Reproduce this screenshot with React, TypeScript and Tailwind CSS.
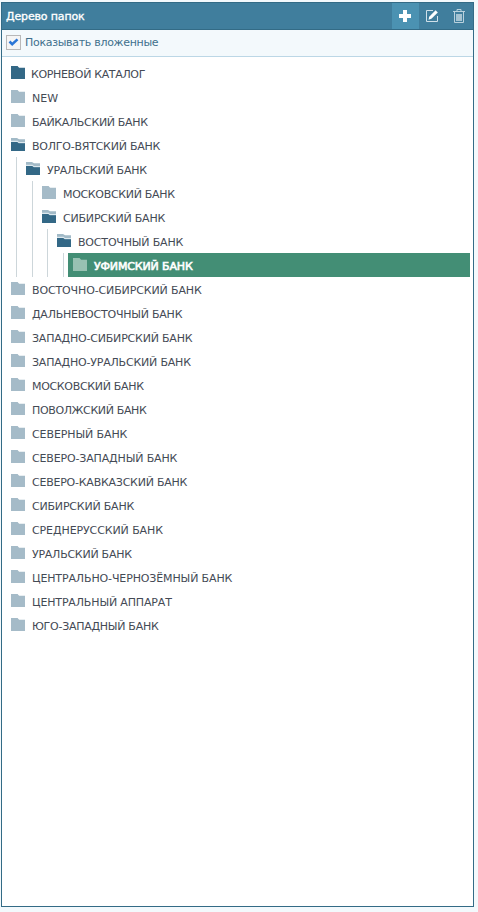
import { useState } from 'react';

type FolderKind = 'root' | 'closed' | 'open';

interface TreeNode {
  name: string;
  tracking?: string;
  kind?: FolderKind;
  selected?: boolean;
  children?: TreeNode[];
}

const tree: TreeNode[] = [
  { name: 'КОРНЕВОЙ КАТАЛОГ', tracking: 'tracking-[-0.34px]', kind: 'root' },
  { name: 'NEW' },
  { name: 'БАЙКАЛЬСКИЙ БАНК', tracking: 'tracking-[-0.34px]' },
  {
    name: 'ВОЛГО-ВЯТСКИЙ БАНК', tracking: 'tracking-[-0.23px]', kind: 'open',
    children: [
      {
        name: 'УРАЛЬСКИЙ БАНК', tracking: 'tracking-[-0.25px]', kind: 'open',
        children: [
          { name: 'МОСКОВСКИЙ БАНК', tracking: 'tracking-[-0.32px]' },
          {
            name: 'СИБИРСКИЙ БАНК', tracking: 'tracking-[-0.2px]', kind: 'open',
            children: [
              {
                name: 'ВОСТОЧНЫЙ БАНК', tracking: 'tracking-[-0.18px]', kind: 'open',
                children: [{ name: 'УФИМСКИЙ БАНК', tracking: 'tracking-[-0.15px]', selected: true }],
              },
            ],
          },
        ],
      },
    ],
  },
  { name: 'ВОСТОЧНО-СИБИРСКИЙ БАНК', tracking: 'tracking-[-0.13px]' },
  { name: 'ДАЛЬНЕВОСТОЧНЫЙ БАНК', tracking: 'tracking-[-0.23px]' },
  { name: 'ЗАПАДНО-СИБИРСКИЙ БАНК', tracking: 'tracking-[-0.2px]' },
  { name: 'ЗАПАДНО-УРАЛЬСКИЙ БАНК', tracking: 'tracking-[-0.2px]' },
  { name: 'МОСКОВСКИЙ БАНК', tracking: 'tracking-[-0.32px]' },
  { name: 'ПОВОЛЖСКИЙ БАНК', tracking: 'tracking-[-0.36px]' },
  { name: 'СЕВЕРНЫЙ БАНК', tracking: 'tracking-[-0.1px]' },
  { name: 'СЕВЕРО-ЗАПАДНЫЙ БАНК', tracking: 'tracking-[-0.15px]' },
  { name: 'СЕВЕРО-КАВКАЗСКИЙ БАНК', tracking: 'tracking-[-0.23px]' },
  { name: 'СИБИРСКИЙ БАНК', tracking: 'tracking-[-0.2px]' },
  { name: 'СРЕДНЕРУССКИЙ БАНК', tracking: 'tracking-[-0.1px]' },
  { name: 'УРАЛЬСКИЙ БАНК', tracking: 'tracking-[-0.25px]' },
  { name: 'ЦЕНТРАЛЬНО-ЧЕРНОЗЁМНЫЙ БАНК', tracking: 'tracking-[-0.13px]' },
  { name: 'ЦЕНТРАЛЬНЫЙ АППАРАТ', tracking: 'tracking-[-0.15px]' },
  { name: 'ЮГО-ЗАПАДНЫЙ БАНК', tracking: 'tracking-[-0.27px]' },
];

const guideOffset = ['', 'ml-[14px]', 'ml-[15px]', 'ml-[14px]', 'ml-[15px]'];

function Folder({ kind, selected }: { kind: FolderKind; selected?: boolean }) {
  if (kind === 'open') {
    return (
      <svg width="14" height="13" viewBox="0 0 14 13" className="shrink-0">
        <path d="M0 0h6l2 1.300h6V6H0z" fill="#a2bac7" />
        <path d="M0 2.800h6.500l1.500 1.200h6v1.300H0z" fill="#dce8ee" />
        <path d="M0 4h6.300l1.500 1.200H14V13H0z" fill="#336886" />
      </svg>
    );
  }
  const fill = kind === 'root' ? '#336886' : selected ? '#98c2b3' : '#a5bbc8';
  return (
    <svg width="14" height="13" viewBox="0 0 14 13" className="shrink-0">
      <path d="M7 1h7v2H7z" fill={fill} opacity="0.25" />
      <path d="M0 0h6.600l1.600 2H14v11H0z" fill={fill} />
    </svg>
  );
}

function Branch({ nodes, depth }: { nodes: TreeNode[]; depth: number }) {
  return (
    <ul className={depth ? `border-l border-[#cdd6da] ${guideOffset[depth]}` : ''}>
      {nodes.map((n) => (
        <li key={n.name}>
          <div
            className={
              n.selected
                ? 'ml-1 flex h-6 items-start gap-[7px] bg-[#438e75] pl-[5px] pt-[5px] text-white [-webkit-text-stroke:0.6px_white]'
                : `flex h-6 items-start pl-[9px] pt-[5px] ${n.kind === 'root' ? 'gap-[6px]' : 'gap-[7px]'}`
            }
          >
            <Folder kind={n.kind ?? 'closed'} selected={n.selected} />
            <span className={`mt-[2px] whitespace-nowrap leading-[14px] ${n.tracking ?? ''}`}>{n.name}</span>
          </div>
          {n.children && <Branch nodes={n.children} depth={depth + 1} />}
        </li>
      ))}
    </ul>
  );
}

export default function App() {
  const [nested, setNested] = useState(true);
  return (
    <div className="h-[912px] w-[478px] bg-[#f3f9fc] pl-px pt-[2px] font-['DejaVu_Sans',sans-serif] text-[11px] text-[#444a55]">
      <section className="flex h-[905px] w-[473px] flex-col border border-[#336b86] bg-white">
        <header className="flex h-[27px] shrink-0 items-stretch border-b border-[#336b86] bg-[#407e9d]">
          <h1 className="flex-1 pl-1 pt-[7px] leading-[14px] tracking-[-0.15px] text-white [-webkit-text-stroke:0.35px_white]">Дерево папок</h1>
          <button aria-label="Добавить" className="flex w-[27px] items-start bg-[#4b92b2] pl-[7px] pt-[7px]">
            <svg width="12" height="12" viewBox="0 0 12 12"><path d="M4 0h4v4h4v4H8v4H4V8H0V4h4z" fill="#fff" /></svg>
          </button>
          <button aria-label="Изменить" className="flex w-[27px] items-start pl-[6px] pt-[6px]">
            <svg width="14" height="14" viewBox="0 0 14 14" fill="none">
              <path d="M8 1.500H1.500v11h11V7" stroke="#cfe0e9" />
              <path d="M3.500 10.700l.7-3L10.600 1.200l2.200 2.200-6.400 6.400z" fill="#fff" />
            </svg>
          </button>
          <button aria-label="Удалить" className="flex w-[27px] items-start pl-[7px] pt-[6px]">
            <svg width="12" height="14" viewBox="0 0 12 14" fill="none">
              <path d="M0 2.500h12M4 2V.5h4V2M1.500 3v10.500h9V3" stroke="#b9d1dd" />
              <path d="M3 5h6v7H3z" fill="#a5c3d2" />
            </svg>
          </button>
        </header>
        <label className="flex h-[27px] shrink-0 items-start border-b border-[#bcd7e6] bg-[#f3f9fc] pl-1 pt-[5px] text-[#41708c]">
          <input type="checkbox" className="sr-only" checked={nested} onChange={() => setNested(!nested)} />
          <span className="flex size-[15px] items-center justify-center border border-[#b8b8b8] bg-[#f5f5f5]">
            {nested && (
              <svg width="11" height="9" viewBox="0 0 11 9" className="-mt-px"><path d="M1.500 3.500l2.700 2.700L9.500 1.300" fill="none" stroke="#2b76d6" strokeWidth="2.500" /></svg>
            )}
          </span>
          <span className="ml-1 mt-px whitespace-nowrap leading-[14px] tracking-[-0.3px]">Показывать вложенные</span>
        </label>
        <div className="min-h-0 flex-1 pr-[3px] pt-1">
          <Branch nodes={tree} depth={0} />
        </div>
      </section>
    </div>
  );
}
